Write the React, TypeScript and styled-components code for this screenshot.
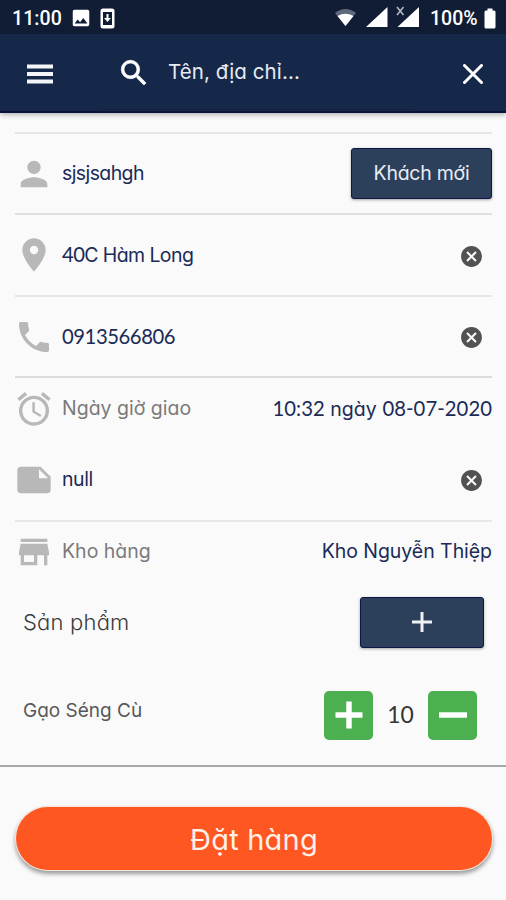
import React from "react";
import styled, { createGlobalStyle } from "styled-components";
import {
  MdAlarm,
  MdCancel,
  MdImage,
  MdNote,
  MdPerson,
  MdPhone,
  MdPlace,
  MdSearch,
  MdStore,
} from "react-icons/md";

const GlobalStyle = createGlobalStyle`
  * { box-sizing: border-box; }
  body {
    margin: 0;
    background: #fafafa;
    font-family: Inter, "Noto Sans", sans-serif;
    font-feature-settings: "cv11";
  }
  button { font: inherit; font-feature-settings: inherit; border: 0; padding: 0; }
  svg { display: block; flex: none; }
`;

const Screen = styled.div`
  width: 506px;
  height: 900px;
  display: flex;
  flex-direction: column;
  background: #fafafa;
  overflow: hidden;
`;

const StatusBar = styled.div`
  height: 34px;
  flex: none;
  display: flex;
  align-items: center;
  padding: 2px 10px 0 12px;
  background: #101d35;
  color: #fff;
  font-family: Roboto, sans-serif;
  font-weight: 500;
  font-size: 19.5px;
`;

const Clock = styled.span`
  width: 58px;
  letter-spacing: 0.1px;
`;

const StatusGroup = styled.div<{ $end?: boolean }>`
  display: flex;
  align-items: center;
  gap: ${(p) => (p.$end ? 0 : 8)}px;
  margin-left: ${(p) => (p.$end ? "auto" : "0")};
`;

const Battery = styled.span`
  width: 50px;
  margin: 0 4px 0 10px;
  white-space: nowrap;
`;

const AppBar = styled.header`
  height: 79px;
  flex: none;
  display: flex;
  align-items: center;
  padding: 2px 23px 0 27px;
  background: #152849;
  border-bottom: 2px solid #0b1238;
  box-shadow: 0 2px 5px rgba(0, 0, 0, 0.28);
  color: #fff;
`;

const SearchField = styled.div`
  flex: 1;
  height: 73px;
  margin: 0 48px 0 46px;
  display: flex;
  align-items: center;
  gap: 17px;
  padding-left: 18px;
  border-bottom: 1px solid #11213f;
`;

const SearchIcon = styled(MdSearch)`
  path:last-child {
    stroke: #fff;
    stroke-width: 0.5px;
  }
`;

const Text = styled.span<{ $size: number; $color: string; $track?: number; $lift?: number; $light?: boolean }>`
  font-size: ${(p) => p.$size}px;
  color: ${(p) => p.$color};
  letter-spacing: ${(p) => p.$track ?? 0}px;
  font-weight: ${(p) => (p.$light ? 300 : 400)};
  padding-bottom: ${(p) => p.$lift ?? 0}px;
  line-height: 1.2;
  white-space: nowrap;
`;

const Digits = styled.span`
  font-family: Lato, sans-serif;
  font-size: 1.04em;
`;

const Form = styled.main`
  padding: 19px 14px 1px 15px;
  display: flex;
  flex-direction: column;
`;

const Row = styled.div<{ $height: number; $line?: string }>`
  height: ${(p) => p.$height}px;
  display: flex;
  align-items: center;
  border-top: ${(p) => (p.$line ? `2px solid ${p.$line}` : "0")};
`;

const RowIcon = styled.span`
  width: 48px;
  margin-left: -1px;
  flex: none;
  color: #b8b8b8;
`;

const Trailing = styled.div<{ $inset?: number }>`
  margin-left: auto;
  padding-right: ${(p) => p.$inset ?? 0}px;
  display: flex;
  align-items: center;
  color: #525252;
`;

const ClearIcon = styled(MdCancel)`
  margin-top: 2px;
`;

const NavyButton = styled.button<{ $width: number }>`
  width: ${(p) => p.$width}px;
  height: 51px;
  display: flex;
  align-items: center;
  justify-content: center;
  color: #fff;
  background: #2c405c;
  border: 1px solid #0e1744;
  border-radius: 3px;
  box-shadow: 0 1px 3px rgba(0, 0, 0, 0.35);
`;

const ProductRow = styled.div<{ $height: number; $right: number; $top?: number }>`
  height: ${(p) => p.$height}px;
  display: flex;
  align-items: center;
  justify-content: space-between;
  padding: ${(p) => p.$top ?? 0}px ${(p) => p.$right}px 0 8px;
`;

const Stepper = styled.div`
  display: grid;
  grid-template-columns: 49px 55px 49px;
  align-items: center;
  justify-items: center;
`;

const GreenButton = styled.button`
  width: 49px;
  height: 49px;
  display: grid;
  place-items: center;
  background: #4caf50;
  border-radius: 5px;
`;

const Footer = styled.footer`
  flex: 1;
  border-top: 2px solid #a6a7a8;
  padding: 40px 14px 0 16px;
`;

const OrderButton = styled.button`
  width: 100%;
  height: 63px;
  display: flex;
  align-items: center;
  justify-content: center;
  padding-top: 3px;
  background: #ff5722;
  border-radius: 32px;
  box-shadow: 0 0 0 1px #f3e6df, 0 3px 4px 1px rgba(0, 0, 0, 0.38);
`;

const navy = "#1b2b57";
const grey = "#7a7a7a";

const DownloadPhone = () => (
  <svg width="15" height="21" viewBox="0 0 15 21">
    <rect x="0.5" y="0.5" width="14" height="20" rx="2.5" fill="#fff" />
    <rect x="3" y="4" width="9" height="13" fill="#101d35" />
    <path d="M6.5 6h2v4h2.5L7.5 14 4 10h2.5z" fill="#fff" />
  </svg>
);

const StatusIcons = () => (
  <svg width="86" height="24" viewBox="0 0 86 24">
    <path d="M1 7Q11.5 -1 22 7L11.5 20z" fill="#5f6a7d" />
    <path d="M3.500 10Q11.500 5.500 19.500 10L11.500 20z" fill="#fff" />
    <path d="M32 21L53.500 21V1z" fill="#fff" />
    <path d="M63.500 21H85V1z" fill="#fff" />
    <path d="M63 1L69.500 9M69.500 1L63 9" stroke="#101d35" strokeWidth="4" />
    <path d="M63 1L69.500 9M69.500 1L63 9" stroke="#b4bac5" strokeWidth="1.600" />
  </svg>
);

const BatteryIcon = () => (
  <svg width="12" height="21" viewBox="0 0 12 21">
    <path d="M3.500 0.500h5v2H10q1.500 0 1.500 1.500v15q0 1.500-1.500 1.500H2Q.5 20.500.5 19V4Q.5 2.500 2 2.500h1.500z" fill="#fff" />
  </svg>
);

const MenuIcon = () => (
  <svg width="26" height="20" viewBox="0 0 26 20">
    <path d="M0 2.500h26M0 10h26M0 17.500h26" stroke="#f4f5f8" strokeWidth="4" />
  </svg>
);

const CloseIcon = () => (
  <svg width="20" height="20" viewBox="0 0 20 20">
    <path d="M1.500 1.500l17 17M18.500 1.500l-17 17" stroke="#fff" strokeWidth="3" strokeLinecap="round" />
  </svg>
);

export default function App() {
  return (
    <>
      <GlobalStyle />
      <Screen>
        <StatusBar>
          <Clock>11:00</Clock>
          <StatusGroup>
            <MdImage size={22} />
            <DownloadPhone />
          </StatusGroup>
          <StatusGroup $end>
            <StatusIcons />
            <Battery>100%</Battery>
            <BatteryIcon />
          </StatusGroup>
        </StatusBar>
        <AppBar>
          <MenuIcon />
          <SearchField>
            <SearchIcon size={34} />
            <Text $size={20.5} $color="#e6eaf2" $track={0.1} $lift={2}>Tên, địa chỉ...</Text>
          </SearchField>
          <CloseIcon />
        </AppBar>

        <Form>
          <Row $height={81} $line="#e6e6e6">
            <RowIcon><MdPerson size={40} /></RowIcon>
            <Text $size={19.5} $color={navy} $track={-0.6}>sjsjsahgh</Text>
            <Trailing>
              <NavyButton $width={141}>
                <Text $size={19.5} $color="#e8ecf3" $track={-0.25}>Khách mới</Text>
              </NavyButton>
            </Trailing>
          </Row>
          <Row $height={82} $line="#e0e0e0">
            <RowIcon><MdPlace size={40} /></RowIcon>
            <Text $size={19.5} $color={navy} $track={-0.6}><Digits>40</Digits>C Hàm Long</Text>
            <Trailing $inset={8}><ClearIcon size={25} /></Trailing>
          </Row>
          <Row $height={81} $line="#e6e6e6">
            <RowIcon><MdPhone size={40} /></RowIcon>
            <Text $size={19.5} $color={navy} $track={-0.45}><Digits>0913566806</Digits></Text>
            <Trailing $inset={8}><ClearIcon size={25} /></Trailing>
          </Row>
          <Row $height={63} $line="#dcdcdc">
            <RowIcon><MdAlarm size={40} /></RowIcon>
            <Text $size={19.5} $color={grey}>Ngày giờ giao</Text>
            <Trailing>
              <Text $size={19.5} $color={navy} $track={0.05}>
                <Digits>10:32</Digits> ngày <Digits>08-07-2020</Digits>
              </Text>
            </Trailing>
          </Row>
          <Row $height={81}>
            <RowIcon><MdNote size={40} /></RowIcon>
            <Text $size={19.5} $color={navy} $track={-0.4}>null</Text>
            <Trailing $inset={8}><ClearIcon size={25} /></Trailing>
          </Row>
          <Row $height={62} $line="#e8e8e8">
            <RowIcon><MdStore size={40} /></RowIcon>
            <Text $size={19.5} $color={grey}>Kho hàng</Text>
            <Trailing>
              <Text $size={19.5} $color={navy} $track={-0.05}>Kho Nguyễn Thiệp</Text>
            </Trailing>
          </Row>
          <ProductRow $height={80} $right={8}>
            <Text $size={22} $color="#3a3a3a" $track={0.2} $light>Sản phẩm</Text>
            <NavyButton $width={124}>
              <svg width="22" height="22" viewBox="0 0 22 22">
                <path d="M11 1v20M1 11h20" stroke="#eef1f6" strokeWidth="3" />
              </svg>
            </NavyButton>
          </ProductRow>
          <ProductRow $height={102} $right={15} $top={4}>
            <Text $size={19} $color="#585858" $lift={7}>Gạo Séng Cù</Text>
            <Stepper>
              <GreenButton>
                <svg width="28" height="28" viewBox="0 0 28 28">
                  <path d="M14 0.500v27M0.500 14h27" stroke="#fff" strokeWidth="5.500" />
                </svg>
              </GreenButton>
              <Text $size={22} $color="#333"><Digits>10</Digits></Text>
              <GreenButton>
                <svg width="28" height="28" viewBox="0 0 28 28">
                  <path d="M0 14h28" stroke="#fff" strokeWidth="5.500" />
                </svg>
              </GreenButton>
            </Stepper>
          </ProductRow>
        </Form>

        <Footer>
          <OrderButton>
            <Text $size={29} $color="#fff0e8" $track={0.2}>Đặt hàng</Text>
          </OrderButton>
        </Footer>
      </Screen>
    </>
  );
}
